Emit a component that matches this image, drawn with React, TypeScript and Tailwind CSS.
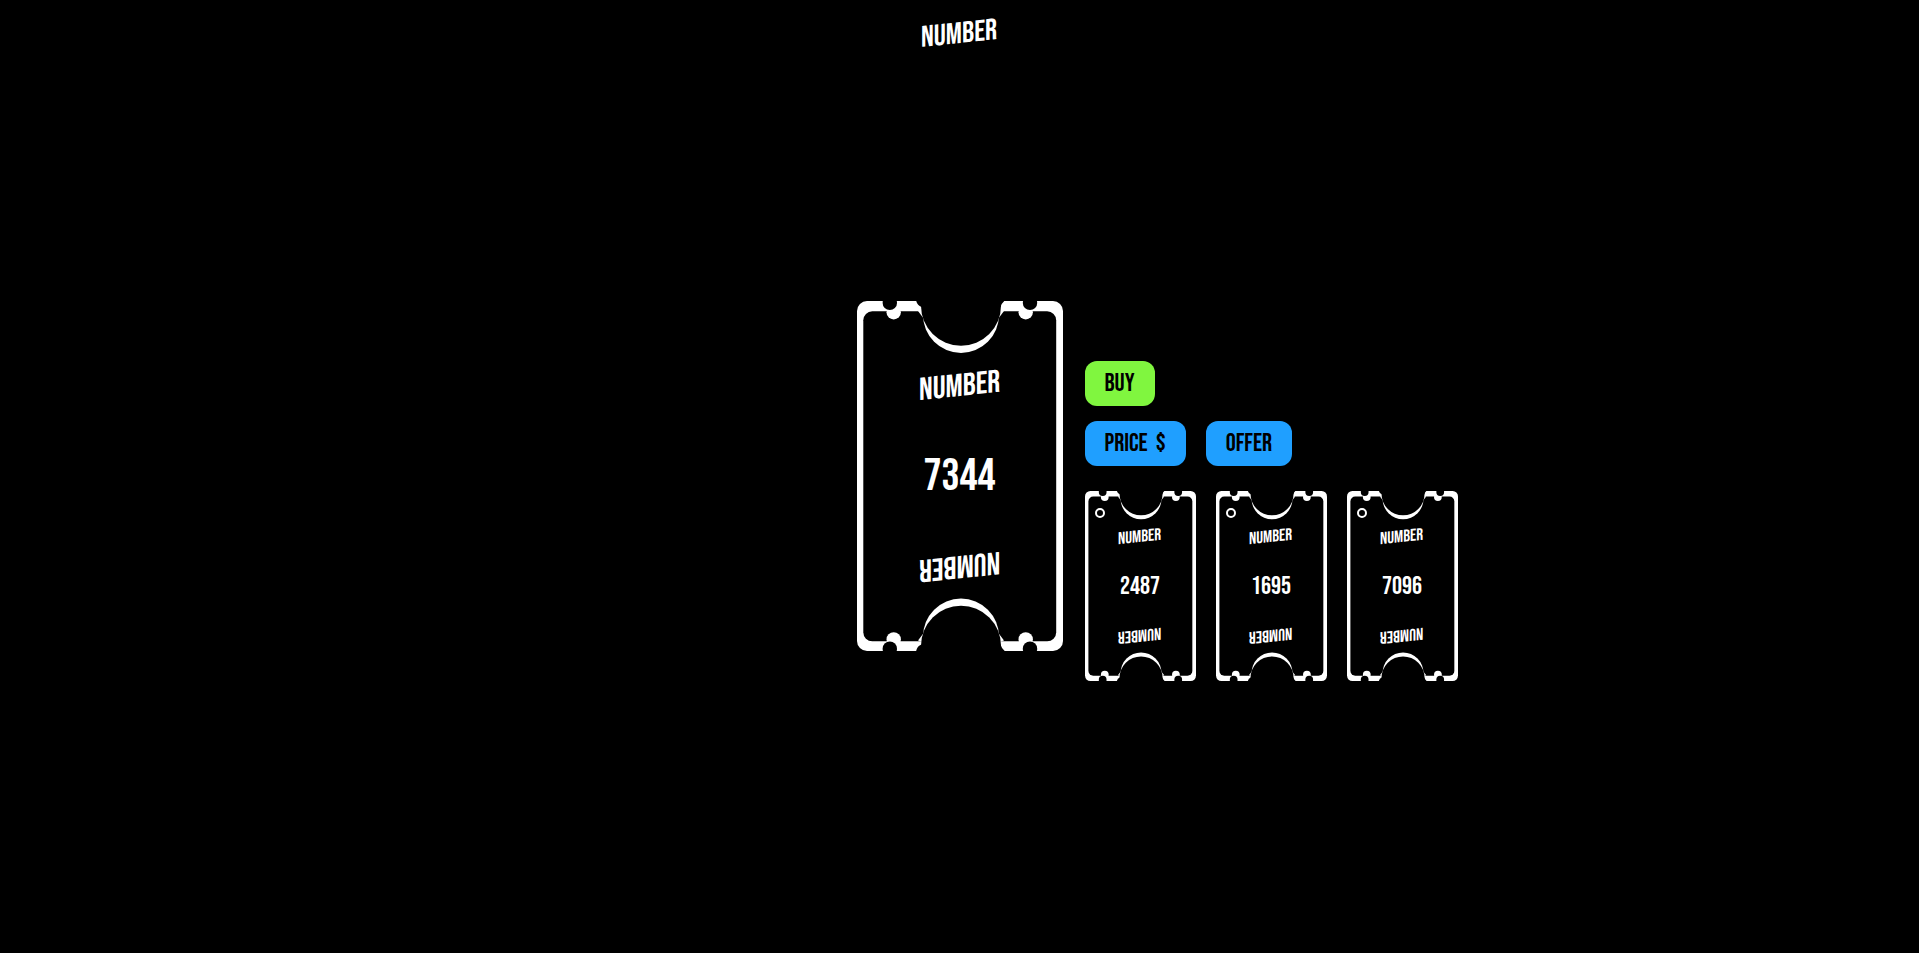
type TicketProps = { value: string; size: "large" | "small" };

const offers = ["2487", "1695", "7096"];

function NotchedEnd() {
  return (
    <>
      <circle cx="36.7" cy="11.2" r="7.2" fill="#fff" />
      <circle cx="168.7" cy="11.2" r="7.2" fill="#fff" />
      <circle cx="104" cy="14" r="38" fill="#fff" />
      <path d="M61 10 L67 18 L67 8 Z M147 10 L141 18 L141 8 Z" fill="#fff" />
      <circle cx="104" cy="4.8" r="40" fill="#000" />
      <path d="M59 -1 Q60 4.5 64.5 6 L143.5 6 Q144.5 2 148.5 -1 Z" fill="#000" />
      <circle cx="32.8" cy="1.9" r="7.2" fill="#000" />
      <circle cx="173" cy="1.9" r="7.2" fill="#000" />
    </>
  );
}

function TicketFrame() {
  return (
    <svg
      viewBox="0 0 206 350"
      preserveAspectRatio="none"
      className="absolute inset-0 size-full"
      aria-hidden="true"
    >
      <rect x="0" y="0" width="206" height="350" rx="10" fill="#fff" />
      <rect x="6.3" y="10.3" width="192.9" height="330" rx="9" fill="#000" />
      <NotchedEnd />
      <g transform="translate(0 349.6) scale(1 -1)">
        <NotchedEnd />
      </g>
    </svg>
  );
}

function Ticket({ value, size }: TicketProps) {
  const large = size === "large";
  const logo = large ? "text-[32px] leading-10" : "text-[17px] leading-5";
  return (
    <div
      className={
        large
          ? "relative flex h-[350px] w-[206px] flex-col items-center justify-between py-[66px]"
          : "relative flex h-[190px] w-[111px] flex-col items-center justify-between py-[36px]"
      }
    >
      <TicketFrame />
      <span className={`relative -skew-y-6 ${logo}`}>NUMBER</span>
      <span className={large ? "relative text-[45px] leading-[45px]" : "relative text-[25px] leading-[25px]"}>
        {value}
      </span>
      <span className={`relative rotate-180 -skew-y-6 ${logo}`}>NUMBER</span>
    </div>
  );
}

export default function App() {
  return (
    <div className="grid min-h-screen grid-rows-[1fr_auto_1fr] bg-black font-['Bebas_Neue','Roboto_Condensed',sans-serif] text-white">
      <header className="flex items-start justify-center pt-3.5">
        <a href="#" className="-skew-y-6 text-[30px] leading-10">
          NUMBER
        </a>
      </header>

      <main className="grid grid-cols-[1fr_auto_1fr] items-center gap-x-[22px] pb-px">
        <div className="col-start-2">
          <Ticket value="7344" size="large" />
        </div>
        <section className="flex flex-col items-start pt-[90px] text-[25px] leading-[45px]">
          <button type="button" className="h-[45px] rounded-xl bg-[#80f63f] px-5 text-black">
            BUY
          </button>
          <div className="mt-[15px] flex gap-5">
            <button type="button" className="h-[45px] rounded-xl bg-[#1f9fff] px-5 whitespace-pre text-black">
              {"PRICE  $"}
            </button>
            <button type="button" className="h-[45px] rounded-xl bg-[#1f9fff] px-5 text-black">
              OFFER
            </button>
          </div>
          <ul className="mt-[25px] flex gap-5">
            {offers.map((value) => (
              <li key={value} className="relative">
                <Ticket value={value} size="small" />
                <input
                  type="checkbox"
                  aria-label={value}
                  className="absolute top-[17px] left-[10px] size-[10px] appearance-none rounded-full border-2 border-white checked:bg-white"
                />
              </li>
            ))}
          </ul>
        </section>
      </main>
    </div>
  );
}
